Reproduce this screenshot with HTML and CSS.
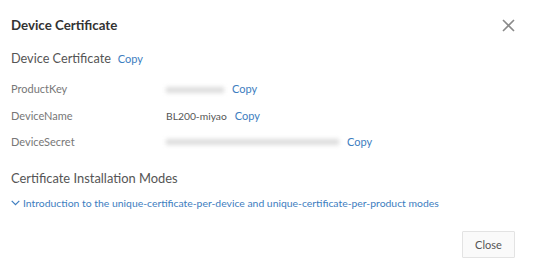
FILE: index.html
```html
<!DOCTYPE html>
<html lang="en">
<head>
    <meta charset="UTF-8">
    <meta name="viewport" content="width=device-width, initial-scale=1.0">
    <title>Device Certificate</title>
    <link rel="stylesheet" href="styles.css">
</head>
<body>
    <div class="dialog">
        <div class="dialog-header">
            <h2 class="dialog-title">Device Certificate</h2>
            <span class="close-x">
                <svg width="13" height="13" viewBox="0 0 13 13"><path d="M1 1L12 12M12 1L1 12" stroke="#8a8a8a" stroke-width="1.6" fill="none"/></svg>
            </span>
        </div>

        <div class="section-head">
            <h3>Device Certificate</h3>
            <a class="copy">Copy</a>
        </div>

        <div class="fields">
            <div class="field">
                <span class="label">ProductKey</span>
                <span class="value"><span class="masked mask-key"></span></span>
                <a class="copy">Copy</a>
            </div>
            <div class="field">
                <span class="label">DeviceName</span>
                <span class="value">BL200-miyao</span>
                <a class="copy">Copy</a>
            </div>
            <div class="field">
                <span class="label">DeviceSecret</span>
                <span class="value"><span class="masked mask-secret"></span></span>
                <a class="copy">Copy</a>
            </div>
        </div>

        <h3 class="modes-title">Certificate Installation Modes</h3>
        <a class="intro-link">
            <svg width="9" height="6" viewBox="0 0 9 6"><path d="M0.7 0.8L4.5 4.6L8.3 0.8" stroke="#3d7dc0" stroke-width="1.2" fill="none"/></svg>
            Introduction to the unique-certificate-per-device and unique-certificate-per-product modes
        </a>

        <div class="dialog-footer">
            <button class="close-btn">Close</button>
        </div>
    </div>
</body>
</html>
```

FILE: styles.css
```css
body {
    margin: 0;
    background-color: #fff;
    font-family: Lato, "Open Sans", sans-serif;
    color: #555;
}
.dialog {
    width: 537px;
    height: 272px;
    padding: 0 22px 0 11px;
    box-sizing: border-box;
}
.dialog-header {
    display: flex;
    justify-content: space-between;
    align-items: center;
    height: 50px;
}
.dialog-title {
    margin: 0;
    font-size: 13.3px;
    font-weight: 700;
    color: #333;
}
.close-x {
    display: flex;
}
.section-head {
    display: flex;
    align-items: baseline;
    gap: 7px;
    height: 12px;
}
.section-head h3 {
    margin: 0;
    font-size: 12.7px;
    font-weight: 400;
    color: #555;
}
.copy {
    color: #3d7dc0;
    font-size: 11px;
    cursor: pointer;
}
.fields {
    margin-top: 12px;
}
.field {
    display: flex;
    align-items: center;
    font-size: 11px;
}
.field:nth-child(1) {
    height: 29px;
}
.field:nth-child(2) {
    height: 25px;
}
.field:nth-child(3) {
    height: 26px;
}
.label {
    width: 155px;
    color: #777;
}
.value {
    color: #555;
    font-size: 10.3px;
    margin-right: 8px;
}
.masked {
    display: inline-block;
    height: 6px;
    background-color: #ddd;
    filter: blur(2px);
    vertical-align: middle;
}
.mask-key {
    width: 58px;
}
.mask-secret {
    width: 173px;
}
.modes-title {
    margin: 16px 0 0;
    font-size: 12.9px;
    font-weight: 400;
    color: #555;
}
.intro-link {
    display: flex;
    align-items: center;
    gap: 3px;
    margin-top: 11px;
    font-size: 10.4px;
    color: #3d7dc0;
    cursor: pointer;
}
.dialog-footer {
    display: flex;
    justify-content: flex-end;
    margin-top: 22px;
}
.close-btn {
    width: 53px;
    height: 27px;
    font-family: inherit;
    font-size: 11px;
    color: #555;
    background-color: #fafafa;
    border: 1px solid #e3e3e3;
    border-radius: 1px;
}
```
